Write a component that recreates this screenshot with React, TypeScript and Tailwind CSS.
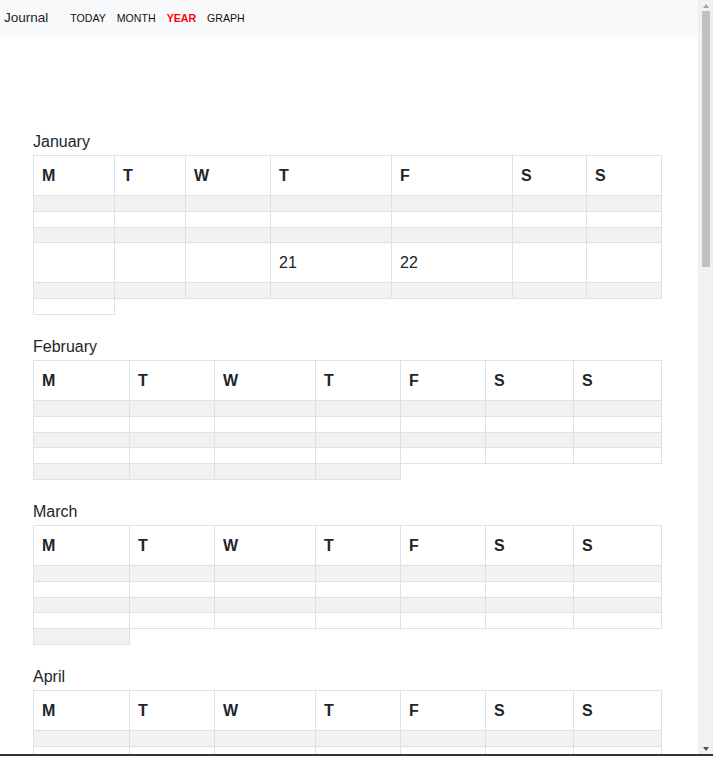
import * as React from 'react';

type Row = { cells: number; h: number; dates?: Record<number, string> };
type Month = { name: string; widths: number[]; rows: Row[] };

const WIDE = [82, 71, 85, 121, 121, 74, 75];
const EVEN = [97, 85, 101, 85, 85, 88, 88];

const months: Month[] = [
  {
    name: 'January',
    widths: WIDE,
    rows: [
      { cells: 7, h: 16 },
      { cells: 7, h: 16 },
      { cells: 7, h: 15 },
      { cells: 7, h: 40, dates: { 3: '21', 4: '22' } },
      { cells: 7, h: 16 },
      { cells: 1, h: 16 },
    ],
  },
  {
    name: 'February',
    widths: EVEN,
    rows: [
      { cells: 7, h: 16 },
      { cells: 7, h: 16 },
      { cells: 7, h: 15 },
      { cells: 7, h: 16 },
      { cells: 4, h: 16 },
    ],
  },
  {
    name: 'March',
    widths: EVEN,
    rows: [
      { cells: 7, h: 16 },
      { cells: 7, h: 16 },
      { cells: 7, h: 15 },
      { cells: 7, h: 16 },
      { cells: 1, h: 16 },
    ],
  },
  ...['April', 'May', 'June', 'July', 'August', 'September', 'October', 'November', 'December'].map(
    (name, i) => ({
      name,
      widths: EVEN,
      rows: [
        { cells: 7, h: 16 },
        { cells: 7, h: 16 },
        { cells: 7, h: 15 },
        { cells: 7, h: 16 },
        { cells: (i % 5) + 2, h: 16 },
      ],
    })
  ),
];

const DAYS = ['M', 'T', 'W', 'T', 'F', 'S', 'S'];

function MonthTable({ month }: { month: Month }) {
  return (
    <section className="mb-[19px]">
      <h5 className="text-[16px] leading-[24px] pt-[1px] mb-[1px] text-[#212529]">{month.name}</h5>
      <div className="w-fit text-[16px] text-[#212529]">
        <div className="flex h-[41px] w-fit border-t border-[#dee2e6]">
          {DAYS.map((d, i) => (
            <div
              key={i}
              style={{ width: month.widths[i] }}
              className={`flex items-center pl-[8px] font-bold border-r border-b border-[#dee2e6] ${i === 0 ? 'border-l' : ''}`}
            >
              {d}
            </div>
          ))}
        </div>
        {month.rows.map((row, r) => (
          <div key={r} className="flex" style={{ height: row.h }}>
            {Array.from({ length: row.cells }).map((_, i) => (
              <div
                key={i}
                style={{ width: month.widths[i] }}
                className={`flex items-center pl-[8px] border-r border-b border-[#dee2e6] ${i === 0 ? 'border-l' : ''} ${r % 2 === 0 ? 'bg-[#f2f2f2]' : 'bg-white'}`}
              >
                {row.dates?.[i] ?? ''}
              </div>
            ))}
          </div>
        ))}
      </div>
    </section>
  );
}

function Scrollbar() {
  return (
    <div className="fixed top-0 right-0 bottom-[4px] w-[15px] bg-[#f1f1f1] flex flex-col items-center">
      <div className="h-[11px] flex items-center justify-center">
        <div className="w-0 h-0 border-l-[3.5px] border-r-[3.5px] border-b-[4px] border-l-transparent border-r-transparent border-b-[#a3a3a3]" />
      </div>
      <div className="w-[8px] h-[256px] bg-[#c1c1c1]" />
      <div className="flex-1" />
      <div className="h-[11px] flex items-center justify-center">
        <div className="w-0 h-0 border-l-[3.5px] border-r-[3.5px] border-t-[4px] border-l-transparent border-r-transparent border-t-[#505050]" />
      </div>
    </div>
  );
}

export default function App() {
  return (
    <div className="min-h-screen bg-white pr-[15px] font-['Liberation_Sans',Arial,sans-serif]">
      <nav className="h-[37px] bg-[#f8f9fa] flex items-center">
        <span className="pl-[4px] text-[13.5px] text-[#212529] mr-[17px]">Journal</span>
        <div className="flex items-center text-[10.6px] text-[#111]">
          <a className="px-[5px]">TODAY</a>
          <a className="px-[5px] ml-[1px]">MONTH</a>
          <a className="px-[5px] ml-[1px] font-bold text-[#f00]">YEAR</a>
          <a className="px-[5px] ml-[1px]">GRAPH</a>
        </div>
      </nav>
      <main className="pt-[92px] pl-[33px]">
        {months.map((m) => (
          <MonthTable key={m.name} month={m} />
        ))}
      </main>
      <Scrollbar />
      <div className="fixed bottom-0 left-0 right-0 h-[4px] bg-white border-t-2 border-[#333]" />
    </div>
  );
}
